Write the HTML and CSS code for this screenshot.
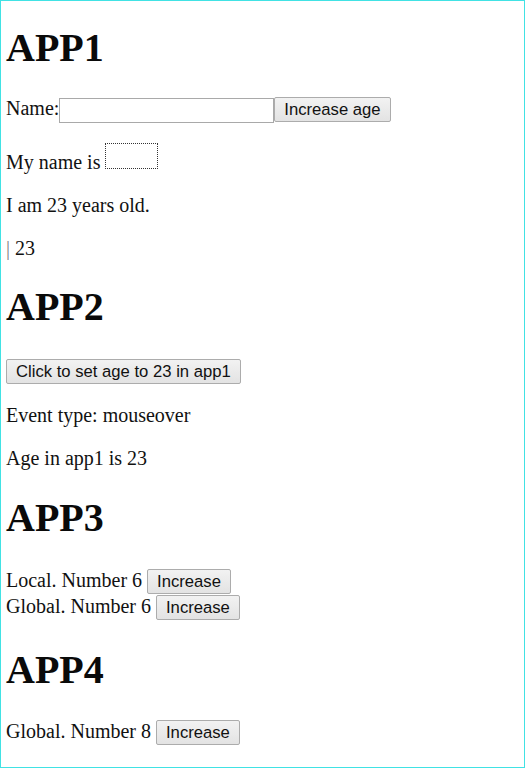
FILE: index.html
```html
<!DOCTYPE html>
<html lang="en">
<head>
<meta charset="utf-8">
<title>Apps</title>
<link rel="stylesheet" href="styles.css">
</head>
<body>
<div class="page">
  <section class="app app1">
    <h1>APP1</h1>
    <p class="row">Name:<input class="name-input" type="text"><button class="btn">Increase age</button></p>
    <p>My name is <span class="name-box"></span></p>
    <p>I am 23 years old.</p>
    <p><span class="bar">|</span> 23</p>
  </section>
  <section class="app app2">
    <h1>APP2</h1>
    <p><button class="btn">Click to set age to 23 in app1</button></p>
    <p>Event type: mouseover</p>
    <p>Age in app1 is 23</p>
  </section>
  <section class="app app3">
    <h1>APP3</h1>
    <div class="line">Local. Number 6 <button class="btn">Increase</button></div>
    <div class="line">Global. Number 6 <button class="btn">Increase</button></div>
  </section>
  <section class="app app4">
    <h1>APP4</h1>
    <div class="line">Global. Number 8 <button class="btn">Increase</button></div>
  </section>
</div>
</body>
</html>
```

FILE: styles.css
```css
html, body {
  margin: 0;
  padding: 0;
  background: #ffffff;
}

.page {
  box-sizing: border-box;
  width: 525px;
  height: 768px;
  border: 1px solid #41e2e4;
  padding: 0 5px;
  font-family: "Liberation Serif", "Times New Roman", serif;
  font-size: 20px;
  color: #111111;
  overflow: hidden;
}

h1 {
  font-size: 40px;
  font-weight: bold;
  margin: 26.8px 0;
  color: #0a0a0a;
}

.app1 h1 {
  margin-top: 22.5px;
}

.app2 h1 {
  margin-top: 23.5px;
  margin-bottom: 29px;
}

.app3 h1 {
  margin-top: 23.5px;
}

.app4 h1 {
  margin-bottom: 26px;
}

p {
  margin: 20px 0;
}

.name-input {
  box-sizing: border-box;
  width: 215px;
  height: 25px;
  margin: 0;
  padding: 1px 3px;
  border: 1px solid #a9a9a9;
  background: #ffffff;
  font-family: "Liberation Sans", Arial, sans-serif;
  font-size: 16px;
  vertical-align: baseline;
}

.btn {
  box-sizing: border-box;
  height: 25px;
  margin: 0;
  padding: 0 9px;
  border: 1px solid #acacac;
  border-radius: 2px;
  background: linear-gradient(#f2f2f2, #e3e3e3);
  color: #111111;
  font-family: "Liberation Sans", Arial, sans-serif;
  font-size: 16.67px;
  line-height: 19px;
}

.name-box {
  display: inline-block;
  box-sizing: border-box;
  width: 53px;
  height: 26px;
  border: 1px dotted #333333;
}

.bar {
  color: #808080;
}

.line {
  line-height: 24px;
}
```
